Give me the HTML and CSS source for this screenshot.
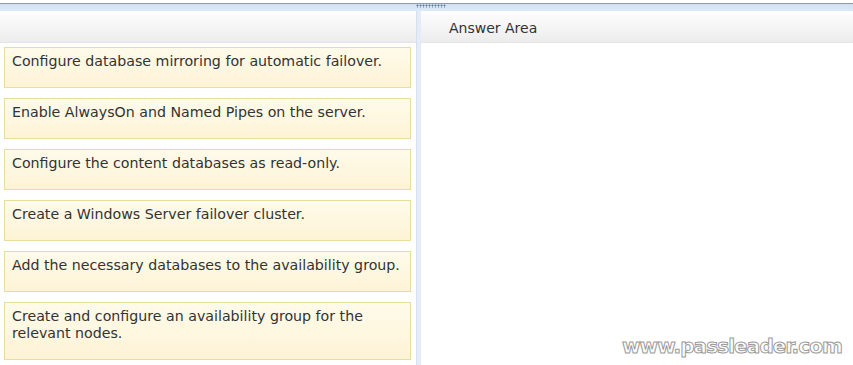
FILE: index.html
```html
<!DOCTYPE html>
<html>
<head>
<meta charset="UTF-8">
<link rel="stylesheet" href="styles.css">
</head>
<body>

<div class="topline"></div>
<div class="topband"><span class="grip"></span></div>

<section class="drag-drop">
  <div class="pane source">
    <div class="pane-head"></div>
    <div class="cards">
      <div class="card">Configure database mirroring for automatic failover.</div>
      <div class="card">Enable AlwaysOn and Named Pipes on the server.</div>
      <div class="card">Configure the content databases as read-only.</div>
      <div class="card">Create a Windows Server failover cluster.</div>
      <div class="card">Add the necessary databases to the availability group.</div>
      <div class="card tall">Create and configure an availability group for the relevant nodes.</div>
    </div>
  </div>
  <div class="splitter"></div>
  <div class="pane answer">
    <div class="pane-head">Answer Area</div>
  </div>
</section>

<div class="watermark">www.passleader.com</div>

</body>
</html>
```

FILE: styles.css
```css
* {
  padding: 0;
  margin: 0;
  box-sizing: border-box;
}

body {
  width: 853px;
  height: 365px;
  overflow: hidden;
  background: #fff;
  font-family: "DejaVu Sans", Verdana, sans-serif;
  color: #333;
  position: relative;
}

.topline {
  height: 4px;
  background: #fff;
  border-bottom: 1px solid #8d9ca8;
}

.topband {
  height: 7px;
  background: linear-gradient(#cfe0f2, #dde9f6);
  display: flex;
  justify-content: center;
}

.grip {
  width: 30px;
  height: 4px;
  margin-left: 8px;
  background-image: radial-gradient(circle, #5f7896 0.9px, transparent 1.1px);
  background-size: 3px 3px;
}

.drag-drop {
  display: flex;
  height: 354px;
}

.pane-head {
  height: 32px;
  background: linear-gradient(#fefefe, #ececec);
  border-bottom: 1px solid #e4e4e4;
  font-size: 14px;
  padding: 9px 0 0 28px;
}

.source {
  width: 416px;
}

.splitter {
  width: 5px;
  background: #e3edf7;
  border-left: 1px solid #d3e0ee;
}

.answer {
  flex: 1;
}

.cards {
  display: flex;
  flex-direction: column;
  gap: 10px;
  padding: 4px 5px 0 4px;
}

.card {
  height: 41px;
  background: linear-gradient(#fffbea, #fdf3d6);
  border: 1px solid #e9dd9e;
  font-size: 14.2px;
  line-height: 17px;
  padding: 5px 10px 0 7px;
}

.card.tall {
  height: 58px;
}

.watermark {
  position: absolute;
  left: 622px;
  top: 334px;
  font-family: "DejaVu Sans", sans-serif;
  font-weight: bold;
  font-size: 20px;
  letter-spacing: -0.9px;
  color: #fff;
  -webkit-text-stroke: 1px #9a9a9a;
}
```
